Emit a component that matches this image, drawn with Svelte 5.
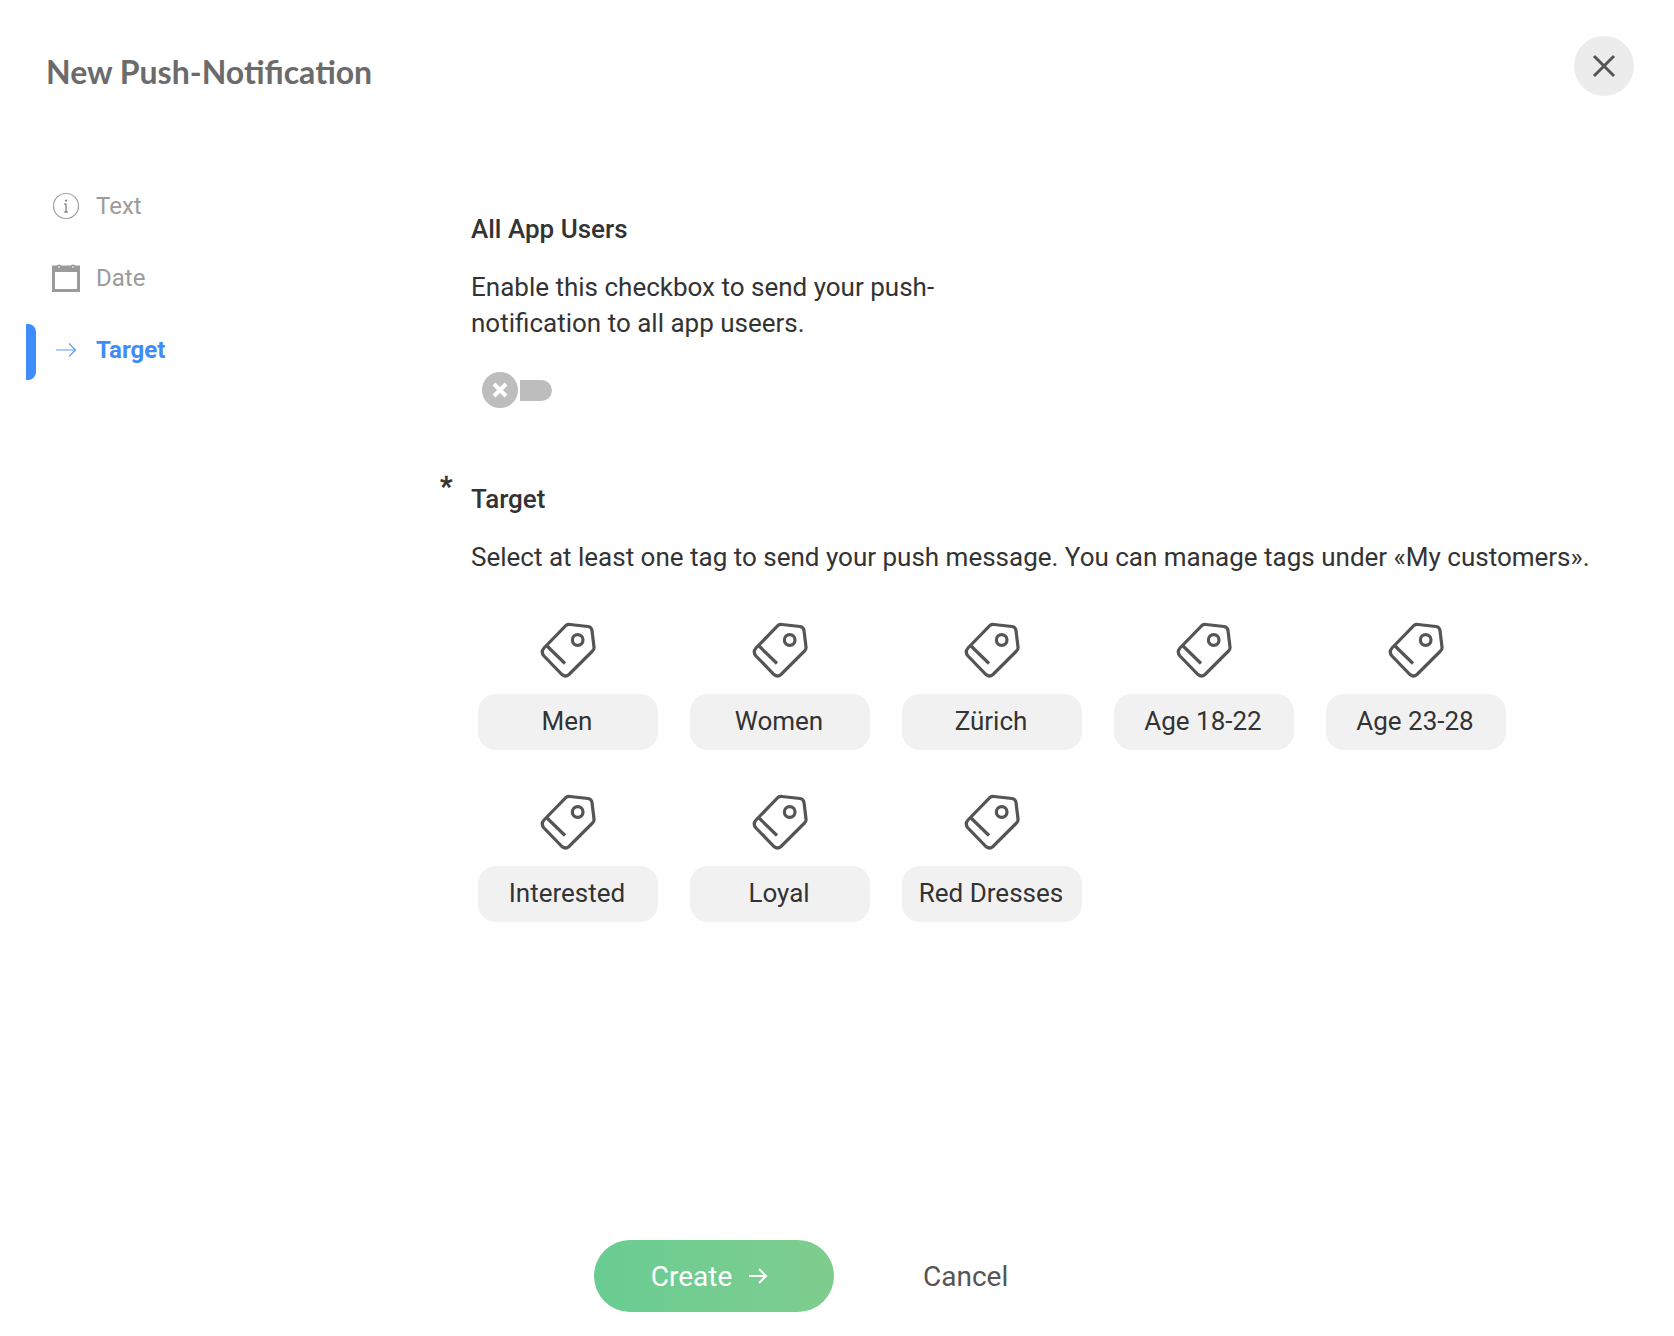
<script>
  const tags = ["Men", "Women", "Zürich", "Age 18-22", "Age 23-28", "Interested", "Loyal", "Red Dresses"];
</script>

<div class="page">
  <header>
    <h1>New Push-Notification</h1>
    <button class="close" aria-label="Close">
      <svg width="24" height="24" viewBox="0 0 24 24"><path d="M2 2 L22 22 M22 2 L2 22" /></svg>
    </button>
  </header>

  <div class="body">
    <nav>
      <div class="step">
        <svg class="icon" width="28" height="28" viewBox="0 0 28 28">
          <circle cx="14" cy="14" r="12.500" fill="none" stroke="#a0a0a0" stroke-width="1.200" />
          <path d="M14 12 V20 M12.300 20 H15.700 M12.300 12 H14" fill="none" stroke="#808080" stroke-width="1.300" />
          <circle cx="14" cy="8.500" r="1.100" fill="#808080" />
        </svg>
        <span>Text</span>
      </div>
      <div class="step">
        <svg class="icon" width="28" height="28" viewBox="0 0 28 28">
          <rect x="1.500" y="3" width="25" height="23.500" fill="none" stroke="#9b9b9b" stroke-width="3" />
          <rect x="0" y="2" width="28" height="6" fill="#9b9b9b" />
          <circle cx="7" cy="3" r="2.500" fill="#9b9b9b" />
          <circle cx="21" cy="3" r="2.500" fill="#9b9b9b" />
          <circle cx="7" cy="3" r="1" fill="#d8d8d8" />
          <circle cx="21" cy="3" r="1" fill="#d8d8d8" />
        </svg>
        <span>Date</span>
      </div>
      <div class="step active">
        <svg class="icon" width="28" height="28" viewBox="0 0 28 28">
          <path d="M4 14 H23.500 M17 7.500 L23.500 14 L17 20.500" fill="none" stroke="#5d9dfa" stroke-width="1.200" />
        </svg>
        <span>Target</span>
      </div>
    </nav>

    <main>
      <section class="all-users">
        <h2>All App Users</h2>
        <p class="narrow">Enable this checkbox to send your push-notification to all app useers.</p>
        <div class="toggle">
          <span class="knob">
            <svg width="18" height="18" viewBox="0 0 18 18"><path d="M3 3 L15 15 M15 3 L3 15" /></svg>
          </span>
          <span class="track"></span>
        </div>
      </section>

      <section class="target">
        <h2><span class="req">*</span>Target</h2>
        <p>Select at least one tag to send your push message. You can manage tags under «My customers».</p>
        <div class="tags">
          {#each tags as tag}
            <div class="tag">
              <svg width="58" height="58" viewBox="0 0 58 58">
                <path d="M5 26 L27 3.500 Q28.500 2.200 31 2.500 L49 4.500 Q52.500 5 53 8.500 L55 25 Q55.300 27.500 53.500 29 L30 52.500 Q26.500 55.500 23 52.500 L5 34 Q1.500 30 5 26 Z" />
                <path d="M7.500 23.500 L26 41.500" />
                <circle cx="38.700" cy="18" r="5.300" />
              </svg>
              <div class="pill"><span>{tag}</span></div>
            </div>
          {/each}
        </div>
      </section>
    </main>
  </div>

  <footer>
    <button class="create">Create
      <svg width="20" height="20" viewBox="0 0 20 20"><path d="M1 10 H18 M11 3 L18 10 L11 17" /></svg>
    </button>
    <button class="cancel">Cancel</button>
  </footer>
</div>

<style>
  :global(body) {
    margin: 0;
    background: #fff;
  }
  .page {
    width: 1674px;
    height: 1336px;
    position: relative;
    display: flex;
    flex-direction: column;
    font-family: Roboto, sans-serif;
    color: #333;
    overflow: hidden;
  }
  header {
    height: 178px;
    padding: 36px 40px 0 46px;
    box-sizing: border-box;
    display: flex;
    justify-content: space-between;
    align-items: flex-start;
  }
  h1 {
    margin: 16px 0 0;
    font-family: Lato, sans-serif;
    font-weight: 700;
    font-size: 32px;
    line-height: 40px;
    color: #6b6b6b;
  }
  .close {
    width: 60px;
    height: 60px;
    border: 0;
    padding: 0;
    border-radius: 50%;
    background: #ececec;
    display: flex;
    align-items: center;
    justify-content: center;
  }
  .close path {
    stroke: #555;
    stroke-width: 3;
    fill: none;
  }
  .body {
    display: flex;
    flex: 1;
  }
  nav {
    width: 471px;
    flex: none;
    display: flex;
    flex-direction: column;
  }
  .step {
    height: 56px;
    margin-bottom: 16px;
    margin-left: 26px;
    padding-left: 26px;
    display: flex;
    align-items: center;
    gap: 16px;
    font-size: 24px;
    color: #9b9b9b;
    border-left: 10px solid transparent;
    box-sizing: border-box;
    position: relative;
  }
  .step .icon {
    flex: none;
    margin-left: -10px;
  }
  .step.active {
    color: #3f8cf8;
    font-weight: 700;
  }
  /* the bar sits 2px lower than the label */
  .step.active::before {
    content: "";
    position: absolute;
    left: -10px;
    top: 2px;
    bottom: -2px;
    width: 10px;
    background: #3f8cff;
    border-radius: 0 8px 8px 0;
  }
  h2 {
    margin: 0;
    font-size: 26px;
    line-height: 32px;
    font-weight: 500;
    color: #333;
    position: relative;
  }
  p {
    margin: 0;
    font-size: 26px;
    line-height: 36px;
    color: #333;
  }
  .narrow {
    width: 480px;
  }
  .all-users {
    padding-top: 35px;
  }
  .all-users p {
    margin-top: 24px;
  }
  .toggle {
    margin: 31px 0 0 11px;
    display: flex;
    align-items: center;
    gap: 2px;
  }
  .knob {
    width: 36px;
    height: 36px;
    border-radius: 50%;
    background: #bdbdbd;
    display: flex;
    align-items: center;
    justify-content: center;
  }
  .knob path {
    stroke: #fff;
    stroke-width: 4;
    fill: none;
  }
  .track {
    width: 32px;
    height: 21px;
    border-radius: 0 11px 11px 0;
    background: #bdbdbd;
  }
  .target {
    margin-top: 75px;
  }
  .req {
    position: absolute;
    left: -31px;
    top: -12px;
    font-size: 28px;
    -webkit-text-stroke: 0.4px #333;
  }
  .target p {
    margin-top: 24px;
    white-space: nowrap;
  }
  .tags {
    margin: 47px 0 0 7px;
    display: grid;
    grid-template-columns: repeat(5, 180px);
    column-gap: 32px;
    row-gap: 44px;
  }
  .tag {
    display: flex;
    flex-direction: column;
    align-items: center;
    gap: 14px;
  }
  .tag svg {
    display: block;
  }
  .tag path,
  .tag circle {
    fill: none;
    stroke: #555;
    stroke-width: 3.200;
  }
  .pill {
    width: 100%;
    height: 56px;
    border-radius: 18px;
    background: #f1f1f1;
    display: flex;
    align-items: center;
    justify-content: center;
    padding: 0 2px 2px 0;
    box-sizing: border-box;
    font-size: 26px;
    color: #333;
  }
  footer {
    position: absolute;
    left: 594px;
    top: 1240px;
    display: flex;
    align-items: center;
    gap: 89px;
  }
  button {
    font-family: inherit;
    cursor: pointer;
  }
  .create {
    width: 240px;
    height: 72px;
    border: 0;
    border-radius: 36px;
    padding: 0 9px 0 0;
    background: linear-gradient(90deg, #69cc92, #7fcd8e);
    color: #fff;
    font-size: 28px;
    display: flex;
    align-items: center;
    justify-content: center;
    gap: 16px;
  }
  .create path {
    stroke: #fff;
    stroke-width: 2;
    fill: none;
  }
  .cancel {
    border: 0;
    background: none;
    padding: 0;
    font-size: 28px;
    color: #555;
  }
</style>
